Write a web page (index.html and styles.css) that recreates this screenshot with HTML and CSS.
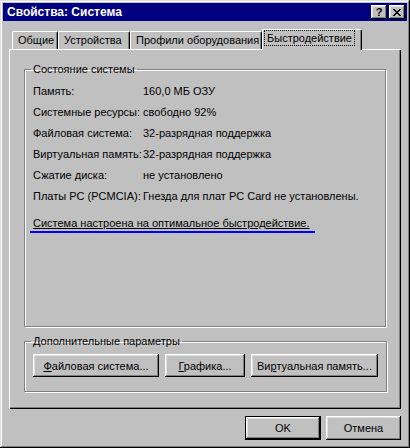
FILE: index.html
```html
<!DOCTYPE html>
<html lang="ru">
<head>
    <meta charset="UTF-8">
    <title>Свойства: Система</title>
    <link rel="stylesheet" href="styles.css">
</head>
<body>
<div class="window">
    <div class="titlebar">
        <span class="title">Свойства: Система</span>
        <div class="ctrls">
            <span class="cbtn cbtn-help">?</span>
            <span class="cbtn cbtn-close">
                <svg width="8" height="7" viewBox="0 0 8 7">
                    <path d="M0 0h2v1h1v1h2v-1h1v-1h2v1h-1v1h-1v1h-1v1h1v1h1v1h1v1h-2v-1h-1v-1h-2v1h-1v1h-2v-1h1v-1h1v-1h1v-1h-1v-1h-1v-1h-1z" fill="#000"/>
                </svg>
            </span>
        </div>
    </div>

    <div class="body">
        <div class="tabs">
            <div class="tab tab-general">Общие</div>
            <div class="tab tab-devices">Устройства</div>
            <div class="tab tab-profiles">Профили оборудования</div>
            <div class="tab tab-perf active"><span class="focus">Быстродействие</span></div>
        </div>

        <div class="panel">
            <fieldset class="group group-status">
                <legend>Состояние системы</legend>
                <div class="info">
                    <div class="row"><span class="key">Память:</span><span class="val">160,0 МБ ОЗУ</span></div>
                    <div class="row"><span class="key">Системные ресурсы:</span><span class="val">свободно 92%</span></div>
                    <div class="row"><span class="key">Файловая система:</span><span class="val">32-разрядная поддержка</span></div>
                    <div class="row"><span class="key">Виртуальная память:</span><span class="val">32-разрядная поддержка</span></div>
                    <div class="row"><span class="key">Сжатие диска:</span><span class="val">не установлено</span></div>
                    <div class="row"><span class="key">Платы PC (PCMCIA):</span><span class="val">Гнезда для плат PC Card не установлены.</span></div>
                </div>
                <div class="status"><span class="mark">Система настроена на оптимальное быстродействие.</span></div>
            </fieldset>

            <fieldset class="group group-adv">
                <legend>Дополнительные параметры</legend>
                <div class="btn-row">
                    <button type="button" class="btn btn-fs"><u>Ф</u>айловая система...</button>
                    <button type="button" class="btn btn-gfx"><u>Г</u>рафика...</button>
                    <button type="button" class="btn btn-vm">Ви<u>р</u>туальная память...</button>
                </div>
            </fieldset>
        </div>

        <div class="dlg-buttons">
            <button type="button" class="btn btn-ok">OK</button>
            <button type="button" class="btn btn-cancel">Отмена</button>
        </div>
    </div>
</div>
</body>
</html>
```

FILE: styles.css
```css
* {
    padding: 0;
    margin: 0;
    box-sizing: border-box;
}

body {
    background: #c0c0c0;
    font-family: "Liberation Sans", Arial, sans-serif;
    font-size: 11px;
    color: #000;
}

.window {
    width: 410px;
    height: 448px;
    padding: 3px;
    background: #c0c0c0;
    box-shadow: inset -1px -1px #000, inset 1px 1px #dfdfdf,
                inset -2px -2px #808080, inset 2px 2px #fff;
}

.titlebar {
    height: 18px;
    background: #000080;
    display: flex;
    align-items: center;
    justify-content: space-between;
    padding: 0 2px 0 4px;
}

.title {
    color: #fff;
    font-weight: bold;
    font-size: 12px;
}

.ctrls {
    display: flex;
    gap: 2px;
}

.cbtn {
    width: 16px;
    height: 14px;
    background: #c0c0c0;
    display: flex;
    align-items: center;
    justify-content: center;
    font-weight: bold;
    font-size: 11px;
    box-shadow: inset -1px -1px #000, inset 1px 1px #fff,
                inset -2px -2px #808080, inset 2px 2px #dfdfdf;
}

.body {
    padding: 8px 6px 0 6px;
}

.tabs {
    height: 20px;
    display: flex;
    align-items: flex-end;
    padding-left: 3px;
}

.tab {
    height: 18px;
    line-height: 17px;
    padding-left: 5px;
    background: #c0c0c0;
    border-top: 1px solid #fff;
    border-left: 1px solid #fff;
    border-right: 1px solid #000;
    box-shadow: inset -1px 0 #808080;
    border-radius: 2px 2px 0 0;
}

.tab-general { width: 46px; }
.tab-devices { width: 72px; }
.tab-profiles { width: 132px; }

.tab.active {
    width: 100px;
    height: 21px;
    margin-bottom: -1px;
    padding-left: 2px;
    position: relative;
    z-index: 1;
}

.focus {
    display: inline-block;
    padding: 0 2px;
    line-height: 14px;
    margin-top: 1px;
    outline: 1px dotted #000;
}

.panel {
    height: 360px;
    padding: 14px 15px 0 15px;
    box-shadow: inset 1px 1px #fff, inset -1px -1px #000, inset -2px -2px #808080;
}

.group {
    border: 1px solid #808080;
    box-shadow: inset 1px 1px #fff, 1px 1px #fff;
    width: 362px;
    padding: 0 8px;
}

.group legend {
    margin-left: -2px;
    padding: 0 2px;
    line-height: 13px;
}

.group-status {
    height: 264px;
}

.info {
    padding-top: 4px;
}

.row {
    display: flex;
    height: 21px;
    align-items: center;
}

.key {
    width: 110px;
}

.status {
    margin-top: 10px;
}

.mark {
    display: inline-block;
    margin-left: -3px;
    padding: 0 5px 1px 3px;
    line-height: 14px;
    text-decoration: underline;
    border-bottom: 2px solid #0000ff;
}

.group-adv {
    margin-top: 8px;
    height: 57px;
}

.btn-row {
    display: flex;
    gap: 6px;
    padding-top: 6px;
}

.btn {
    height: 23px;
    background: #c0c0c0;
    border: none;
    font-family: inherit;
    font-size: 11px;
    color: #000;
    box-shadow: inset -1px -1px #000, inset 1px 1px #fff,
                inset -2px -2px #808080, inset 2px 2px #dfdfdf;
}

.btn-fs { width: 126px; }
.btn-gfx { width: 80px; }
.btn-vm { width: 127px; }

.dlg-buttons {
    display: flex;
    justify-content: flex-end;
    gap: 5px;
    padding-top: 7px;
}

.btn-ok {
    width: 76px;
    height: 24px;
    border: 1px solid #000;
}

.btn-cancel {
    width: 75px;
    height: 24px;
}
```
